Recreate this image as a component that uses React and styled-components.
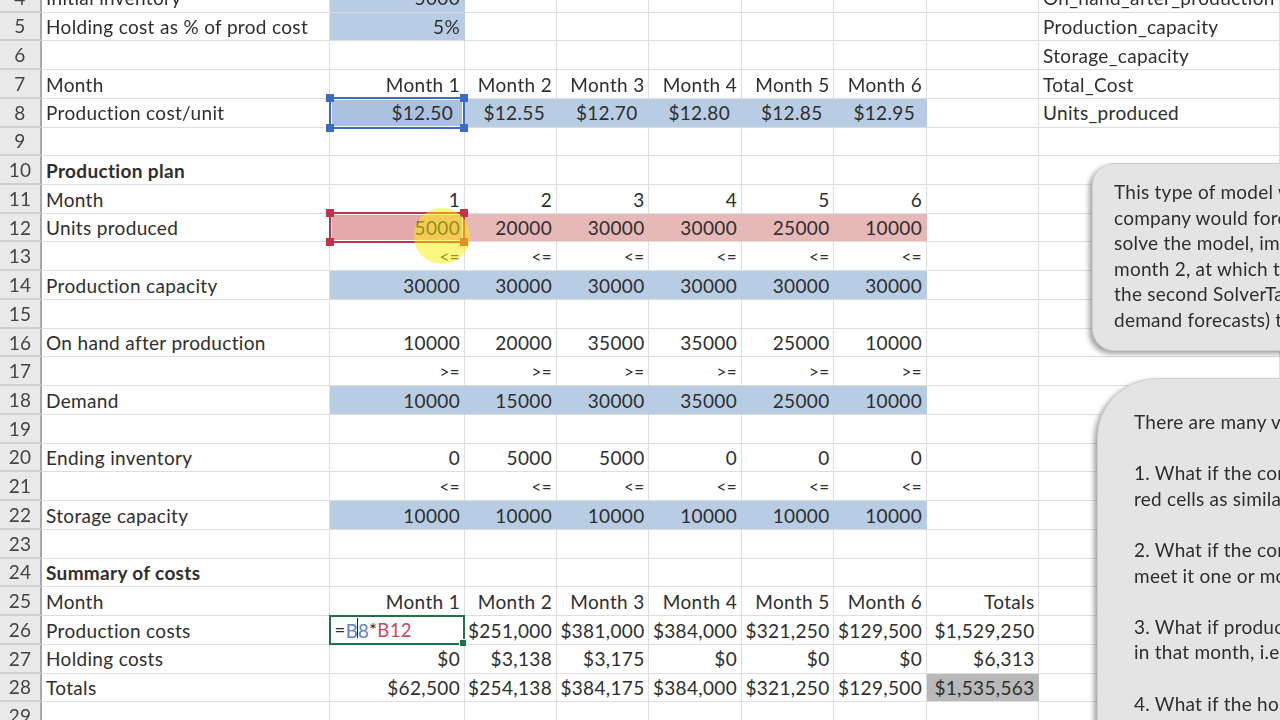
import styled, { createGlobalStyle } from 'styled-components';

const GlobalStyle = createGlobalStyle`
  html, body {
    margin: 0;
    width: 1280px;
    height: 720px;
    overflow: hidden;
    background: #fff;
  }
`;

const Page = styled.div`
  position: relative;
  width: 1280px;
  height: 720px;
  overflow: hidden;
  font-family: Lato, 'Liberation Sans', sans-serif;
  font-size: 19px;
  letter-spacing: 0.33px;
  color: #2e2e2e;
  filter: blur(0.4px);
`;

const Sheet = styled.div`
  display: flex;
  flex-direction: column;
  margin-top: -16.14px;
`;

const Row = styled.div`
  display: grid;
  grid-template-columns: 42px 288px 134.5px 92px 92.5px 92.5px 92.5px 92.5px 112.5px 241px;
  height: 28.74px;
`;

const RowHead = styled.div`
  display: flex;
  align-items: center;
  justify-content: center;
  background: #e9e9e9;
  border-right: 2px solid #a9a9a9;
  border-bottom: 2px solid #cfcfcf;
  color: #444;
  box-sizing: border-box;
`;

const fills = {
  blue: '#b8cce4',
  blueSel: '#aac1e1',
  red: '#e6b8b7',
  redSel: '#e6a9ab',
  gray: '#b9b9b9',
};

const Cell = styled.div`
  position: relative;
  display: flex;
  align-items: center;
  justify-content: ${(p) => (p.$left ? 'flex-start' : 'flex-end')};
  box-sizing: border-box;
  padding: 0.5px ${(p) => (p.$indent ? '10.5px' : '3.5px')} 0 4px;
  white-space: nowrap;
  font-size: ${(p) => (p.$small ? '17px' : 'inherit')};
  font-weight: ${(p) => (p.$bold ? 700 : 400)};
  background: ${(p) => fills[p.$fill] || '#fff'};
  border-right: 1.5px solid ${(p) => (p.$fill ? 'transparent' : '#dedede')};
  border-bottom: 1.5px solid #dedede;
`;

const Selection = styled.div`
  position: absolute;
  z-index: 2;
  inset: -2px -1.5px -2px -1.5px;
  border: 2px solid ${(p) => p.$color};
  outline: 1px solid #fff;
  outline-offset: -3px;
`;

const Handle = styled.span`
  position: absolute;
  width: 8px;
  height: 8px;
  background: ${(p) => p.$color};
  ${(p) => (p.$top ? 'top: -5px;' : 'bottom: -5px;')}
  ${(p) => (p.$start ? 'left: -5px;' : 'right: -5px;')}
`;

const EditCell = styled.div`
  position: absolute;
  z-index: 2;
  inset: -1.5px -1px -1px -1.5px;
  display: flex;
  align-items: center;
  padding-left: 4px;
  border: 2px solid #217346;
  background: #fff;
  font-size: 18.6px;
`;

const FillHandle = styled.span`
  position: absolute;
  right: -3px;
  bottom: -3px;
  width: 6px;
  height: 6px;
  background: #217346;
  border-top: 1px solid #fff;
  border-left: 1px solid #fff;
`;

const RefB = styled.span`
  color: #5b82cf;
`;

const RefR = styled.span`
  color: #c9485f;
`;

const Caret = styled.i`
  display: inline-block;
  width: 1px;
  height: 20px;
  margin: 0 -0.5px;
  background: #222;
`;

const Highlight = styled.div`
  position: absolute;
  z-index: 3;
  left: 414px;
  top: 208px;
  width: 56px;
  height: 56px;
  border-radius: 50%;
  background: radial-gradient(circle, rgba(255, 238, 0, 0.5) 0 76%, rgba(255, 240, 0, 0.06) 100%);
`;

const Callout = styled.div`
  position: absolute;
  box-sizing: border-box;
  left: ${(p) => p.$left}px;
  top: ${(p) => p.$top}px;
  width: 300px;
  height: ${(p) => p.$height}px;
  padding: ${(p) => p.$pad};
  border-radius: ${(p) => p.$radius}px;
  background: #e4e4e4;
  border: 1px solid #cfcfcf;
  box-shadow: -3px 3px 5px rgba(90, 90, 90, 0.55);
  line-height: 25.6px;
  letter-spacing: 0.25px;
  white-space: nowrap;
  overflow: hidden;
`;

const CalloutLine = styled.div`
  height: 25.6px;
`;

const months = ['Month 1', 'Month 2', 'Month 3', 'Month 4', 'Month 5', 'Month 6'];

const rows = [
  { n: 4, label: 'Initial inventory', values: ['5000'], fill: 'blue', fillCount: 1, name: 'On_hand_after_production' },
  { n: 5, label: 'Holding cost as % of prod cost', values: ['5%'], fill: 'blue', fillCount: 1, name: 'Production_capacity' },
  { n: 6, values: [], name: 'Storage_capacity' },
  { n: 7, label: 'Month', values: months, name: 'Total_Cost' },
  { n: 8, label: 'Production cost/unit', values: ['$12.50', '$12.55', '$12.70', '$12.80', '$12.85', '$12.95'], fill: 'blue', indent: true, name: 'Units_produced' },
  { n: 9, values: [] },
  { n: 10, label: 'Production plan', bold: true, values: [] },
  { n: 11, label: 'Month', values: ['1', '2', '3', '4', '5', '6'] },
  { n: 12, label: 'Units produced', values: ['5000', '20000', '30000', '30000', '25000', '10000'], fill: 'red' },
  { n: 13, values: ['<=', '<=', '<=', '<=', '<=', '<='], small: true },
  { n: 14, label: 'Production capacity', values: ['30000', '30000', '30000', '30000', '30000', '30000'], fill: 'blue' },
  { n: 15, values: [] },
  { n: 16, label: 'On hand after production', values: ['10000', '20000', '35000', '35000', '25000', '10000'] },
  { n: 17, values: ['>=', '>=', '>=', '>=', '>=', '>='], small: true },
  { n: 18, label: 'Demand', values: ['10000', '15000', '30000', '35000', '25000', '10000'], fill: 'blue' },
  { n: 19, values: [] },
  { n: 20, label: 'Ending inventory', values: ['0', '5000', '5000', '0', '0', '0'] },
  { n: 21, values: ['<=', '<=', '<=', '<=', '<=', '<='], small: true },
  { n: 22, label: 'Storage capacity', values: ['10000', '10000', '10000', '10000', '10000', '10000'], fill: 'blue' },
  { n: 23, values: [] },
  { n: 24, label: 'Summary of costs', bold: true, values: [] },
  { n: 25, label: 'Month', values: months, total: 'Totals' },
  { n: 26, label: 'Production costs', values: ['', '$251,000', '$381,000', '$384,000', '$321,250', '$129,500'], total: '$1,529,250' },
  { n: 27, label: 'Holding costs', values: ['$0', '$3,138', '$3,175', '$0', '$0', '$0'], total: '$6,313' },
  { n: 28, label: 'Totals', values: ['$62,500', '$254,138', '$384,175', '$384,000', '$321,250', '$129,500'], total: '$1,535,563', totalFill: 'gray' },
  { n: 29, values: [] },
];

const handles = (color) => (
  <>
    <Handle $color={color} $top $start />
    <Handle $color={color} $top />
    <Handle $color={color} $start />
    <Handle $color={color} />
  </>
);

const firstNote = [
  'This type of model would',
  'company would forecast',
  'solve the model, implement',
  'month 2, at which time',
  'the second SolverTable',
  'demand forecasts) to',
];

const secondNote = [
  'There are many variations',
  '',
  '1. What if the company',
  'red cells as similar',
  '',
  '2. What if the company',
  'meet it one or more',
  '',
  '3. What if production',
  'in that month, i.e.',
  '',
  '4. What if the holding',
];

function SheetRow({ row }) {
  const filled = row.fillCount || 6;
  const cellFill = (i) => {
    if (!row.fill || i >= filled) return undefined;
    return i === 0 && (row.n === 8 || row.n === 12) ? `${row.fill}Sel` : row.fill;
  };
  return (
    <Row>
      <RowHead>{row.n}</RowHead>
      <Cell $left $bold={row.bold}>{row.label}</Cell>
      {[0, 1, 2, 3, 4, 5].map((i) => (
        <Cell key={i} $fill={cellFill(i)} $small={row.small} $indent={row.indent}>
          {row.values[i]}
          {row.n === 8 && i === 0 && <Selection $color="#3a6cc4">{handles('#3a6cc4')}</Selection>}
          {row.n === 12 && i === 0 && <Selection $color="#c4314b">{handles('#c4314b')}</Selection>}
          {row.n === 26 && i === 0 && (
            <EditCell>
              =<RefB>B<Caret />8</RefB>*<RefR>B12</RefR>
              <FillHandle />
            </EditCell>
          )}
        </Cell>
      ))}
      <Cell $fill={row.totalFill}>{row.total}</Cell>
      <Cell $left>{row.name}</Cell>
    </Row>
  );
}

export default function App() {
  return (
    <Page>
      <GlobalStyle />
      <Sheet>
        {rows.map((row) => (
          <SheetRow key={row.n} row={row} />
        ))}
      </Sheet>
      <Highlight />
      <Callout $left={1092} $top={163} $height={188} $radius={22} $pad="15px 0 0 21px">
        {firstNote.map((line) => (
          <CalloutLine key={line}>{line}</CalloutLine>
        ))}
      </Callout>
      <Callout $left={1097} $top={378} $height={420} $radius={60} $pad="30px 0 0 36px">
        {secondNote.map((line, i) => (
          <CalloutLine key={i}>{line}</CalloutLine>
        ))}
      </Callout>
    </Page>
  );
}
